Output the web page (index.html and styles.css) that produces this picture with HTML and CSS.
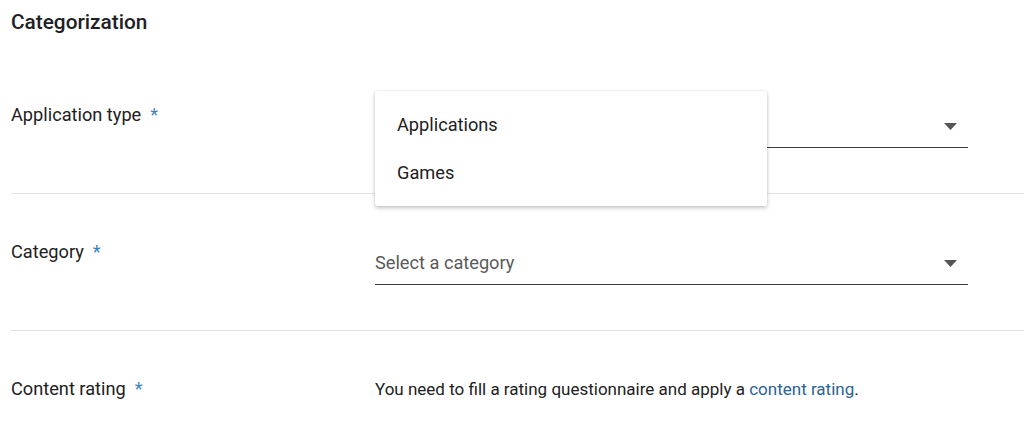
FILE: index.html
```html
<!DOCTYPE html>
<html lang="en">
<head>
<meta charset="utf-8">
<title>Categorization</title>
<link rel="stylesheet" href="styles.css">
</head>
<body>
<div class="page">
  <h2 class="title">Categorization</h2>

  <div class="row">
    <div class="label">Application type<span class="req">*</span></div>
    <div class="field">
      <span class="value"></span>
      <svg class="arrow" width="13" height="7" viewBox="0 0 13 7"><path d="M0 0h13L6.5 7z"/></svg>
      <div class="menu">
        <div class="menu-item">Applications</div>
        <div class="menu-item">Games</div>
      </div>
    </div>
  </div>

  <div class="row">
    <div class="label">Category<span class="req">*</span></div>
    <div class="field">
      <span class="value placeholder">Select a category</span>
      <svg class="arrow" width="13" height="7" viewBox="0 0 13 7"><path d="M0 0h13L6.5 7z"/></svg>
    </div>
  </div>

  <div class="row last">
    <div class="label">Content rating<span class="req">*</span></div>
    <div class="desc">You need to fill a rating questionnaire and apply a <a href="#" class="link">content rating</a>.</div>
  </div>
</div>
</body>
</html>
```

FILE: styles.css
```css
html, body {
  margin: 0;
  padding: 0;
  background: #ffffff;
  overflow: hidden;
}

body {
  font-family: Roboto, "Noto Sans", Arial, sans-serif;
  color: #212121;
}

.page {
  padding: 8px 0 0 11px;
}

.title {
  margin: 0 0 21px;
  font-size: 20.8px;
  line-height: 28px;
  font-weight: 500;
  color: #202124;
}

.row {
  display: grid;
  grid-template-columns: 364px 593px;
  align-items: start;
  padding: 45px 0 45px;
  border-bottom: 1px solid #e3e3e3;
}

.row.last {
  border-bottom: none;
}

.label {
  font-size: 18.2px;
  line-height: 26px;
  color: #212121;
}

.req {
  margin-left: 9px;
  color: #3a84bd;
}

.field {
  position: relative;
  display: flex;
  align-items: center;
  justify-content: space-between;
  height: 26px;
  padding: 11px 11px 8px 0;
  border-bottom: 1px solid #3a3a3a;
  font-size: 18.2px;
  line-height: 26px;
}

.placeholder {
  color: #5a5a5a;
}

.arrow {
  display: block;
  fill: #555555;
}

.menu {
  position: absolute;
  top: -11px;
  left: 0;
  width: 392px;
  padding: 10px 0 9px;
  background: #ffffff;
  border-radius: 2px;
  box-shadow: 0 2px 4px rgba(0, 0, 0, 0.22), 0 0 2px rgba(0, 0, 0, 0.12);
  z-index: 2;
}

.menu-item {
  height: 48px;
  display: flex;
  align-items: center;
  padding-left: 22px;
  font-size: 18.2px;
  line-height: 26px;
  color: #212121;
}

.desc {
  font-size: 17px;
  line-height: 26px;
  color: #212121;
}

.link {
  color: #2a6394;
  text-decoration: none;
}
```
